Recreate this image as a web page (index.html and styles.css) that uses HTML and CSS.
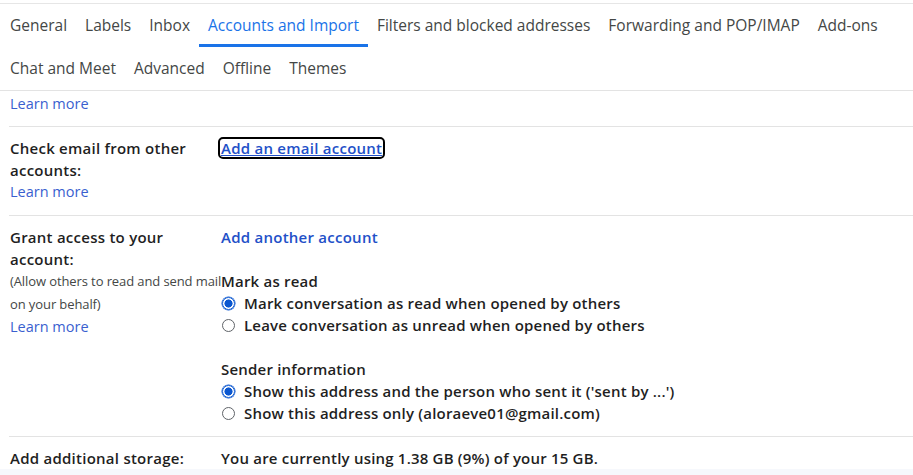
FILE: index.html
```html
<!DOCTYPE html>
<html>
<head>
<meta charset="utf-8">
<link rel="stylesheet" href="styles.css">
</head>
<body>
<div class="panel">
  <nav class="tabs">
    <div class="tabrow">
      <span class="tab">General</span>
      <span class="tab">Labels</span>
      <span class="tab">Inbox</span>
      <span class="tab active">Accounts and Import</span>
      <span class="tab">Filters and blocked addresses</span>
      <span class="tab">Forwarding and POP/IMAP</span>
      <span class="tab">Add-ons</span>
    </div>
    <div class="tabrow">
      <span class="tab">Chat and Meet</span>
      <span class="tab">Advanced</span>
      <span class="tab">Offline</span>
      <span class="tab">Themes</span>
    </div>
  </nav>
  <div class="settings">
    <div class="row row-first">
      <div class="label"><a class="link plain">Learn more</a></div>
      <div class="value"></div>
    </div>
    <div class="row">
      <div class="label">
        <div class="title">Check email from other accounts:</div>
        <a class="link plain">Learn more</a>
      </div>
      <div class="value">
        <a class="link focused">Add an email account</a>
      </div>
    </div>
    <div class="row">
      <div class="label">
        <div class="title">Grant access to your account:</div>
        <div class="note">(Allow others to read and send mail on your behalf)</div>
        <a class="link plain">Learn more</a>
      </div>
      <div class="value">
        <a class="link strong">Add another account</a>
        <div class="group">
          <div class="group-title">Mark as read</div>
          <div class="option"><span class="radio checked"></span><span>Mark conversation as read when opened by others</span></div>
          <div class="option"><span class="radio"></span><span>Leave conversation as unread when opened by others</span></div>
        </div>
        <div class="group">
          <div class="group-title">Sender information</div>
          <div class="option"><span class="radio checked"></span><span>Show this address and the person who sent it ('sent by ...')</span></div>
          <div class="option"><span class="radio"></span><span>Show this address only (aloraeve01@gmail.com)</span></div>
        </div>
      </div>
    </div>
    <div class="row">
      <div class="label"><div class="title">Add additional storage:</div></div>
      <div class="value"><div class="storage">You are currently using 1.38 GB (9%) of your 15 GB.</div></div>
    </div>
  </div>
</div>
</body>
</html>
```

FILE: styles.css
```css
html, body {
  margin: 0;
  padding: 0;
}
body {
  background: #f6f8fc;
  font-family: "Open Sans", "Noto Sans", sans-serif;
  color: #1f1f1f;
  font-size: 14px;
}
.panel {
  background: #fff;
  height: 469px;
  overflow: hidden;
  padding-top: 3px;
  box-sizing: border-box;
}
.tabs {
  border-top: 1px solid #e6e6e6;
  border-bottom: 1px solid #e3e3e3;
}
.tabrow {
  display: flex;
  height: 43px;
  padding-left: 1px;
}
.tab {
  display: flex;
  align-items: center;
  padding: 0 9px;
  font-size: 15.5px;
  color: #444746;
  border-bottom: 3px solid transparent;
  box-sizing: border-box;
  white-space: nowrap;
  padding-top: 1px;
}
.tabrow + .tabrow .tab {
  padding-top: 1px;
  padding-bottom: 0;
}
.tab.active {
  color: #1a73e8;
  border-bottom-color: #1a73e8;
}
.settings {
  margin-left: 9px;
}
.row {
  display: flex;
  border-top: 1px solid #e3e3e3;
  padding: 10px 0 12px;
  line-height: 22px;
}
.row-first {
  border-top: none;
  padding: 2px 0 11px;
}
.label {
  width: 211px;
  flex: none;
  padding-left: 1px;
}
.title {
  font-size: 15px;
  letter-spacing: 0.25px;
  font-weight: 600;
  color: #1f1f1f;
}
.note {
  font-size: 13px;
  line-height: 23px;
  color: #444746;
  width: 213px;
  letter-spacing: -0.1px;
}
.value {
  flex: 1;
  font-size: 15px;
  letter-spacing: 0.2px;
  font-weight: 600;
  color: #1f1f1f;
}
.link {
  color: #3a5fcf;
  font-weight: 400;
  font-size: 14.5px;
  letter-spacing: 0;
  cursor: pointer;
}
.plain {
  text-decoration: none;
  display: block;
}
.focused {
  color: #2250c8;
  font-size: 15px;
  letter-spacing: 0.25px;
  font-weight: 600;
  text-decoration: underline;
  outline: 2px solid #000;
  border-radius: 3px;
  padding: 0 1px;
  margin-left: -1px;
  line-height: 18px;
  display: inline-block;
}
.strong {
  color: #2250c8;
  font-size: 15px;
  letter-spacing: 0.25px;
  font-weight: 600;
  display: block;
}
.group {
  margin-top: 22px;
}
.option {
  display: flex;
  align-items: center;
}
.radio {
  width: 11px;
  height: 11px;
  border: 1px solid #5f6368;
  border-radius: 50%;
  margin: 0 9px 0 1px;
  box-sizing: content-box;
  flex: none;
}
.radio.checked {
  border: 1px solid #0b57d0;
  background: radial-gradient(circle, #0b57d0 0 3.8px, #fff 4.3px);
  box-shadow: 0 0 0 0.5px #0b57d0;
}
```
